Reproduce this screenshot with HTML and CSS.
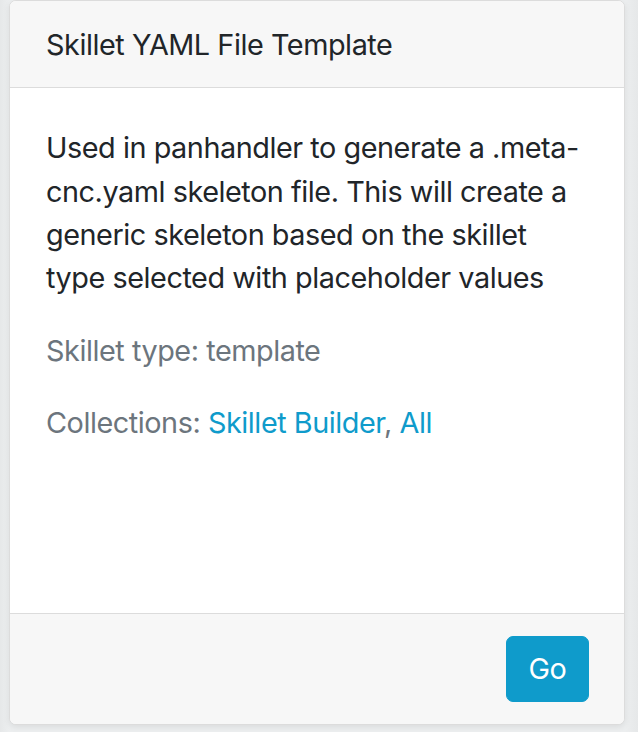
FILE: index.html
```html
<!DOCTYPE html>
<html>
<head>
<meta charset="utf-8">
<link rel="stylesheet" href="styles.css">
</head>
<body>
<div class="page">
  <div class="card">
    <div class="card-header">Skillet YAML File Template</div>
    <div class="card-body">
      <p class="desc">Used in panhandler to generate a .meta-cnc.yaml skeleton file. This will create a generic skeleton based on the skillet type selected with placeholder values</p>
      <p class="muted">Skillet type: template</p>
      <p class="muted">Collections: <a href="#" class="link">Skillet Builder</a>, <a href="#" class="link">All</a></p>
    </div>
    <div class="card-footer">
      <a href="#" class="btn">Go</a>
    </div>
  </div>
</div>
</body>
</html>
```
FILE: styles.css
```css
html, body {
  margin: 0;
  padding: 0;
}
body {
  background: #ebedee;
  font-family: Inter, "Liberation Sans", Arial, sans-serif;
  font-size: 28.8px;
  line-height: 43.2px;
  letter-spacing: -0.45px;
  color: #212529;
}
.page {
  width: 638px;
  height: 732px;
  box-sizing: border-box;
  padding: 0 13px 7px 9px;
  background: linear-gradient(to right, #e6e8e9 0, #eceeef 9px, #eceeef 625px, #e6e8e9 638px);
}
.card {
  height: 725px;
  box-sizing: border-box;
  display: flex;
  flex-direction: column;
  background: #fff;
  border: 1px solid #dcdcdc;
  border-radius: 7px;
  box-shadow: 0 2px 6px rgba(0, 0, 0, 0.08);
  overflow: hidden;
}
.card-header {
  background: #f7f7f7;
  border-bottom: 1px solid #dcdcdc;
  padding: 21.6px 36px;
  height: 43.2px;
  white-space: nowrap;
}
.card-body {
  flex: 1;
  padding: 38px 36px 36px;
}
.card-body p {
  margin: 0 0 29.5px 0;
}
.desc {
  margin-right: -4px;
}
.muted {
  color: #6c757d;
}
.link {
  color: #0f9bcb;
  text-decoration: none;
}
.card-footer {
  background: #f7f7f7;
  border-top: 1px solid #dcdcdc;
  padding: 21.6px 35px;
  display: flex;
  justify-content: flex-end;
}
.btn {
  display: inline-block;
  background: #0f9bcb;
  color: #fff;
  text-decoration: none;
  border: 1px solid #0f9bcb;
  border-radius: 7px;
  padding: 10.8px 21.6px;
  line-height: 43.2px;
}
```
